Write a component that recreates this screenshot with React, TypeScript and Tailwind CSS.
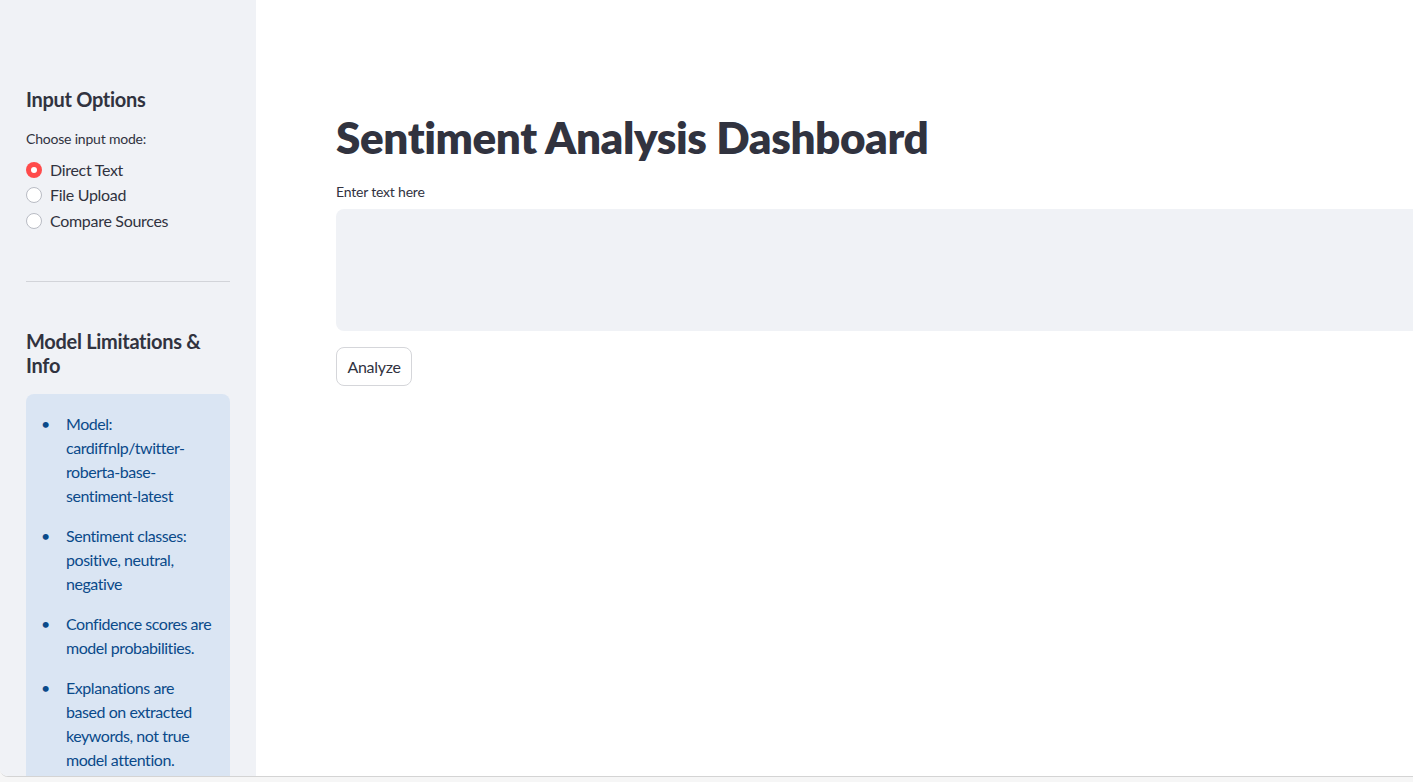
const font = { fontFamily: "Lato, 'Noto Sans', sans-serif" }

function Radio({ label, checked }: { label: string; checked?: boolean }) {
  return (
    <label className="flex h-[25.5px] items-center gap-2 text-[16px] tracking-[-0.3px] text-[#31333f]">
      {checked ? (
        <span className="flex h-4 w-4 items-center justify-center rounded-full bg-[#ff4b4b]">
          <span className="h-1.5 w-1.5 rounded-full bg-white" />
        </span>
      ) : (
        <span className="h-4 w-4 rounded-full border border-[#b9bcc4] bg-white" />
      )}
      <span>{label}</span>
    </label>
  )
}

export default function App() {
  const notes = [
    "Model: cardiffnlp/twitter-roberta-base-sentiment-latest",
    "Sentiment classes: positive, neutral, negative",
    "Confidence scores are model probabilities.",
    "Explanations are based on extracted keywords, not true model attention.",
  ]

  return (
    <div className="h-[782px] w-[1413px] overflow-hidden bg-[#f6f6f6]" style={font}>
      <div className="flex h-[777px] overflow-hidden rounded-bl-lg border-b border-[#d4d4d4] bg-white">
        {/* Sidebar */}
        <aside className="w-[256px] shrink-0 bg-[#f0f2f6] px-[26px] pt-[87px]">
          <h2 className="text-[20px] font-bold leading-6 tracking-[-0.3px] text-[#31333f]">Input Options</h2>
          <p className="mt-[18px] text-[14px] leading-5 tracking-[-0.2px] text-[#31333f]">Choose input mode:</p>
          <div className="mt-[8px] flex flex-col">
            <Radio label="Direct Text" checked />
            <Radio label="File Upload" />
            <Radio label="Compare Sources" />
          </div>
          <hr className="mt-[47px] border-[#d2d4d9]" />
          <h2 className="mt-[47px] text-[20px] font-bold leading-6 tracking-[-0.3px] text-[#31333f]">
            Model Limitations &amp; Info
          </h2>
          <div className="mt-[17px] rounded-lg bg-[#dae5f3] px-4 pb-6 pt-[18px] text-[16px] leading-6 tracking-[-0.45px] text-[#0a4a8a]">
            <ul className="flex flex-col gap-4">
              {notes.map((n) => (
                <li key={n} className="flex">
                  <span className="w-6 shrink-0 -indent-px">•</span>
                  <span className="min-w-0 break-words">{n}</span>
                </li>
              ))}
            </ul>
          </div>
        </aside>

        {/* Main */}
        <main className="min-w-0 flex-1 pl-[80px] pt-[109px]">
          <h1 className="text-[44px] font-extrabold leading-[56px] tracking-[-0.4px] text-[#31333f]">
            Sentiment Analysis Dashboard
          </h1>
          <p className="mt-[17px] text-[14px] leading-5 tracking-[-0.2px] text-[#31333f]">Enter text here</p>
          <div className="mt-[7px] h-[122px] w-[1200px] rounded-lg bg-[#f0f2f6]" />
          <button className="mt-4 h-[39px] w-[76px] rounded-lg border border-[#d5d6da] bg-white text-[16px] tracking-[-0.3px] text-[#31333f]">
            Analyze
          </button>
        </main>
      </div>
    </div>
  )
}
